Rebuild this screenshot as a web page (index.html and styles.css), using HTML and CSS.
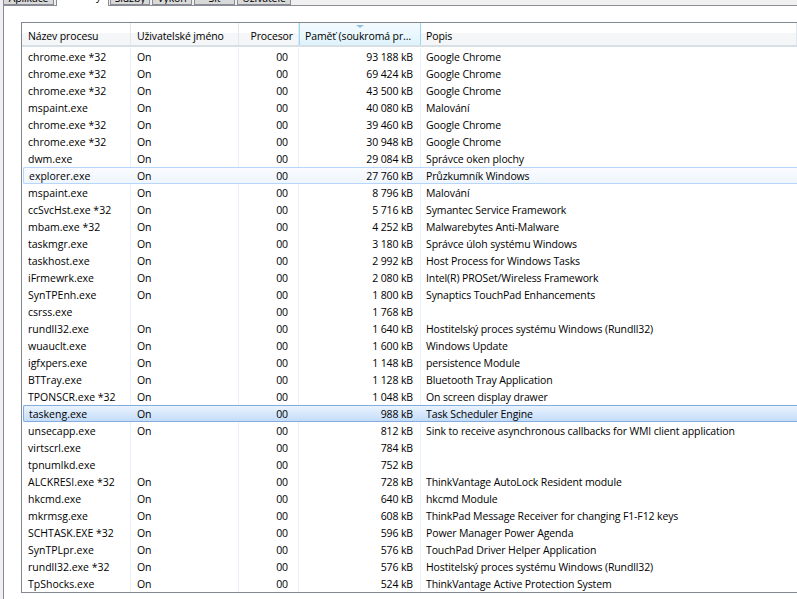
FILE: index.html
```html
<!DOCTYPE html>
<html>
<head>
  <title>Správce úloh</title>
  <link rel="stylesheet" href="styles.css">
</head>
<body>
  <div class="tabs">
    <div class="tab tab-apps">Aplikace</div>
    <div class="tab tab-active">Procesy</div>
    <div class="tab tab-services">Služby</div>
    <div class="tab tab-perf">Výkon</div>
    <div class="tab tab-net">Síť</div>
    <div class="tab tab-users">Uživatelé</div>
  </div>
  <div class="panel">
    <div class="list">
      <div class="row head">
        <div class="c name">Název procesu</div>
        <div class="c user">Uživatelské jméno</div>
        <div class="c cpu">Procesor</div>
        <div class="c mem sorted"><span class="arrow"></span>Paměť (soukromá pr…</div>
        <div class="c desc">Popis</div>
      </div>
      <div class="row"><div class="c name">chrome.exe *32</div><div class="c user">On</div><div class="c cpu">00</div><div class="c mem">93 188 kB</div><div class="c desc">Google Chrome</div></div>
      <div class="row"><div class="c name">chrome.exe *32</div><div class="c user">On</div><div class="c cpu">00</div><div class="c mem">69 424 kB</div><div class="c desc">Google Chrome</div></div>
      <div class="row"><div class="c name">chrome.exe *32</div><div class="c user">On</div><div class="c cpu">00</div><div class="c mem">43 500 kB</div><div class="c desc">Google Chrome</div></div>
      <div class="row"><div class="c name">mspaint.exe</div><div class="c user">On</div><div class="c cpu">00</div><div class="c mem">40 080 kB</div><div class="c desc">Malování</div></div>
      <div class="row"><div class="c name">chrome.exe *32</div><div class="c user">On</div><div class="c cpu">00</div><div class="c mem">39 460 kB</div><div class="c desc">Google Chrome</div></div>
      <div class="row"><div class="c name">chrome.exe *32</div><div class="c user">On</div><div class="c cpu">00</div><div class="c mem">30 948 kB</div><div class="c desc">Google Chrome</div></div>
      <div class="row"><div class="c name">dwm.exe</div><div class="c user">On</div><div class="c cpu">00</div><div class="c mem">29 084 kB</div><div class="c desc">Správce oken plochy</div></div>
      <div class="row hover"><div class="c name">explorer.exe</div><div class="c user">On</div><div class="c cpu">00</div><div class="c mem">27 760 kB</div><div class="c desc">Průzkumník Windows</div></div>
      <div class="row"><div class="c name">mspaint.exe</div><div class="c user">On</div><div class="c cpu">00</div><div class="c mem">8 796 kB</div><div class="c desc">Malování</div></div>
      <div class="row"><div class="c name">ccSvcHst.exe *32</div><div class="c user">On</div><div class="c cpu">00</div><div class="c mem">5 716 kB</div><div class="c desc">Symantec Service Framework</div></div>
      <div class="row"><div class="c name">mbam.exe *32</div><div class="c user">On</div><div class="c cpu">00</div><div class="c mem">4 252 kB</div><div class="c desc">Malwarebytes Anti-Malware</div></div>
      <div class="row"><div class="c name">taskmgr.exe</div><div class="c user">On</div><div class="c cpu">00</div><div class="c mem">3 180 kB</div><div class="c desc">Správce úloh systému Windows</div></div>
      <div class="row"><div class="c name">taskhost.exe</div><div class="c user">On</div><div class="c cpu">00</div><div class="c mem">2 992 kB</div><div class="c desc">Host Process for Windows Tasks</div></div>
      <div class="row"><div class="c name">iFrmewrk.exe</div><div class="c user">On</div><div class="c cpu">00</div><div class="c mem">2 080 kB</div><div class="c desc">Intel(R) PROSet/Wireless Framework</div></div>
      <div class="row"><div class="c name">SynTPEnh.exe</div><div class="c user">On</div><div class="c cpu">00</div><div class="c mem">1 800 kB</div><div class="c desc">Synaptics TouchPad Enhancements</div></div>
      <div class="row"><div class="c name">csrss.exe</div><div class="c user"></div><div class="c cpu">00</div><div class="c mem">1 768 kB</div><div class="c desc"></div></div>
      <div class="row"><div class="c name">rundll32.exe</div><div class="c user">On</div><div class="c cpu">00</div><div class="c mem">1 640 kB</div><div class="c desc">Hostitelský proces systému Windows (Rundll32)</div></div>
      <div class="row"><div class="c name">wuauclt.exe</div><div class="c user">On</div><div class="c cpu">00</div><div class="c mem">1 600 kB</div><div class="c desc">Windows Update</div></div>
      <div class="row"><div class="c name">igfxpers.exe</div><div class="c user">On</div><div class="c cpu">00</div><div class="c mem">1 148 kB</div><div class="c desc">persistence Module</div></div>
      <div class="row"><div class="c name">BTTray.exe</div><div class="c user">On</div><div class="c cpu">00</div><div class="c mem">1 128 kB</div><div class="c desc">Bluetooth Tray Application</div></div>
      <div class="row"><div class="c name">TPONSCR.exe *32</div><div class="c user">On</div><div class="c cpu">00</div><div class="c mem">1 048 kB</div><div class="c desc">On screen display drawer</div></div>
      <div class="row selected"><div class="c name">taskeng.exe</div><div class="c user">On</div><div class="c cpu">00</div><div class="c mem">988 kB</div><div class="c desc">Task Scheduler Engine</div></div>
      <div class="row"><div class="c name">unsecapp.exe</div><div class="c user">On</div><div class="c cpu">00</div><div class="c mem">812 kB</div><div class="c desc">Sink to receive asynchronous callbacks for WMI client application</div></div>
      <div class="row"><div class="c name">virtscrl.exe</div><div class="c user"></div><div class="c cpu">00</div><div class="c mem">784 kB</div><div class="c desc"></div></div>
      <div class="row"><div class="c name">tpnumlkd.exe</div><div class="c user"></div><div class="c cpu">00</div><div class="c mem">752 kB</div><div class="c desc"></div></div>
      <div class="row"><div class="c name">ALCKRESI.exe *32</div><div class="c user">On</div><div class="c cpu">00</div><div class="c mem">728 kB</div><div class="c desc">ThinkVantage AutoLock Resident module</div></div>
      <div class="row"><div class="c name">hkcmd.exe</div><div class="c user">On</div><div class="c cpu">00</div><div class="c mem">640 kB</div><div class="c desc">hkcmd Module</div></div>
      <div class="row"><div class="c name">mkrmsg.exe</div><div class="c user">On</div><div class="c cpu">00</div><div class="c mem">608 kB</div><div class="c desc">ThinkPad Message Receiver for changing F1-F12 keys</div></div>
      <div class="row"><div class="c name">SCHTASK.EXE *32</div><div class="c user">On</div><div class="c cpu">00</div><div class="c mem">596 kB</div><div class="c desc">Power Manager Power Agenda</div></div>
      <div class="row"><div class="c name">SynTPLpr.exe</div><div class="c user">On</div><div class="c cpu">00</div><div class="c mem">576 kB</div><div class="c desc">TouchPad Driver Helper Application</div></div>
      <div class="row"><div class="c name">rundll32.exe *32</div><div class="c user">On</div><div class="c cpu">00</div><div class="c mem">576 kB</div><div class="c desc">Hostitelský proces systému Windows (Rundll32)</div></div>
      <div class="row"><div class="c name">TpShocks.exe</div><div class="c user">On</div><div class="c cpu">00</div><div class="c mem">524 kB</div><div class="c desc">ThinkVantage Active Protection System</div></div>
    </div>
  </div>
</body>
</html>
```

FILE: styles.css
```css
html, body { margin: 0; padding: 0; }
body {
  width: 797px;
  height: 599px;
  overflow: hidden;
  background-color: #f0f0f0;
  font-family: "Open Sans", "Noto Sans", sans-serif;
  font-size: 10.5px;
  letter-spacing: -0.12px;
  color: #000;
}

/* Tabs, cut off by the top edge of the window */
.tabs { position: relative; z-index: 1; display: flex; height: 6px; padding-left: 3px; overflow: hidden; }
.tab {
  flex: none;
  box-sizing: border-box;
  height: 5px;
  margin-right: 2px;
  display: flex;
  align-items: flex-end;
  justify-content: center;
  line-height: 12px;
  white-space: nowrap;
  overflow: hidden;
  border: 1px solid #898c95;
  border-top: none;
  background: #d9d9d9;
}
.tab-apps { width: 51px; }
.tab-active {
  width: 53px;
  height: 6px;
  margin-right: 1px;
  line-height: 20px;
  background: #fff;
  border-bottom: none;
}
.tab-services { width: 40px; }
.tab-perf { width: 40px; }
.tab-net { width: 41px; }
.tab-users { width: 54px; }

/* Tab page */
.panel {
  height: 594px;
  box-sizing: border-box;
  margin-top: -1px;
  margin-left: 3px;
  padding: 16px 0 0 17px;
  background-color: #fff;
  border-top: 1px solid #898c95;
  border-left: 1px solid #898c95;
}
.list {
  height: 571px;
  box-sizing: border-box;
  border-top: 1px solid #828790;
  border-left: 1px solid #828790;
  border-bottom: 1px solid #828790;
  overflow: hidden;
}

/* Rows and columns */
.row { display: flex; height: 17px; line-height: 17px; box-sizing: border-box; }
.c {
  flex: none;
  box-sizing: border-box;
  white-space: nowrap;
  overflow: hidden;
  border-right: 1px solid #e8f0fa;
  padding: 1px 6px 0;
}
.name { width: 109px; letter-spacing: 0; }
.user { width: 108px; }
.cpu { width: 60px; text-align: right; padding-right: 10px; }
.mem { width: 122px; text-align: right; padding-right: 7px; }
.desc { flex: 1; border-right: none; padding-left: 5px; }

/* Header */
.head {
  height: 24px;
  margin-bottom: 1px;
  line-height: 26px;
  background: linear-gradient(#fff 0, #fff 45%, #f5f6f7 45%, #f5f6f7 100%);
  border-bottom: 2px solid #d5dfe5;
}
.head .c { padding-top: 0; border-right: 1px solid #e3e8ee; }
.head .name { letter-spacing: -0.12px; }
.head .cpu { padding-right: 5px; }
.head .mem { text-align: left; padding: 0 0 0 5px; position: relative; }
.head .sorted {
  background: linear-gradient(#f4fbff, #def3fc);
  border-left: 1px solid #96d9f9;
  border-right: 1px solid #96d9f9;
}
.arrow {
  position: absolute;
  top: 2px;
  left: 56px;
  width: 0;
  height: 0;
  border-left: 4px solid transparent;
  border-right: 4px solid transparent;
  border-top: 3px solid #8fc1e0;
}

/* Hovered and selected rows have a rounded frame */
.hover, .selected {
  margin-left: 1px;
  border: 1px solid #b8d6fb;
  border-right: none;
  border-radius: 2px 0 0 2px;
  line-height: 15px;
}
.hover { background: linear-gradient(#fafbfe, #eff6fe); }
.selected { border-color: #84acdd; background: linear-gradient(#eaf3fd, #c4ddfa); }
.hover .c, .selected .c { border-right-color: transparent; }
.hover .name, .selected .name { width: 107px; padding-left: 5px; }
```
